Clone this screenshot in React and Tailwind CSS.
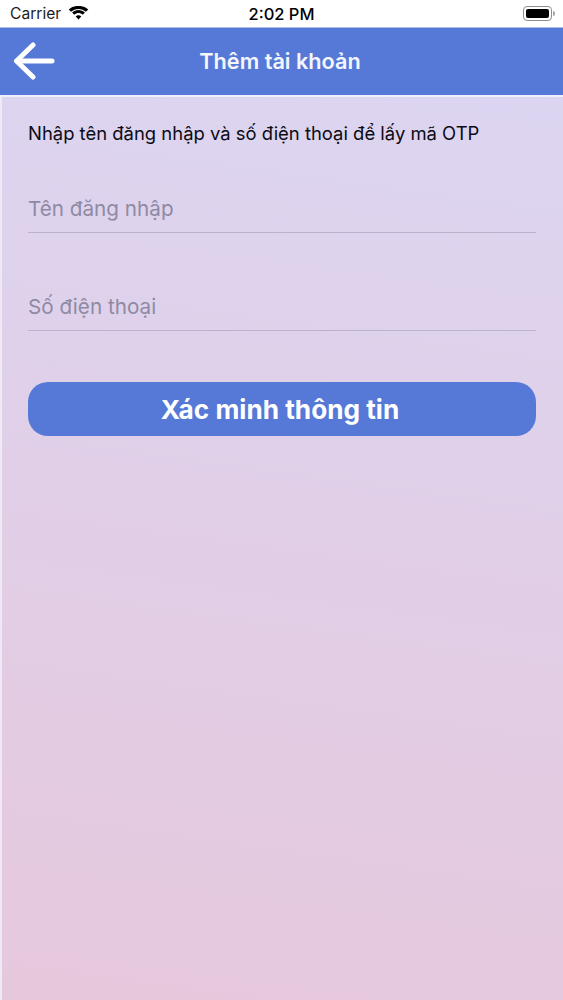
import React from "react";

function Wifi() {
  return (
    <svg width="21" height="15" viewBox="0 0 21 15" className="ml-[7px] -mt-[1px]" fill="#000">
      <path d="M10.500 2.900c2.900 0 5.400 1 7.400 2.900L20.300 3.500C17.700 1.100 14.300-.1 10.500-.1S3.300 1.100.7 3.500l2.400 2.300c2-1.900 4.500-2.900 7.400-2.900z" />
      <path d="M10.500 7.100c1.600 0 3.100.6 4.300 1.600l2.100-2.200c-1.700-1.500-4-2.400-6.400-2.400S5.800 5 4.100 6.500l2.100 2.200c1.200-1 2.700-1.600 4.300-1.600z" />
      <path d="M10.500 9.300c-1.100 0-2.100.4-2.800 1.100l2.800 3.100 2.800-3.100c-.7-.7-1.700-1.100-2.800-1.100z" />
    </svg>
  );
}

function Battery() {
  return (
    <div className="flex items-center">
      <div className="w-[29px] h-[15px] rounded-[4px] border border-[#8f8f8f] p-[2px] flex">
        <div className="flex-1 rounded-[2px] bg-black" />
      </div>
      <div className="ml-[1px] w-[2px] h-[5px] rounded-r-sm bg-[#a5a5a5]" />
    </div>
  );
}

function Field({ label, className }) {
  return (
    <div className={`h-[50px] border-b border-[#bcb2cf] flex items-center ${className}`}>
      <span className="text-[20.700px] leading-[24px] text-[#8f8aa3] mt-[2px]">{label}</span>
    </div>
  );
}

export default function App() {
  return (
    <div className="w-[563px] h-[1000px] overflow-hidden flex flex-col bg-white font-['Inter','Noto_Sans',sans-serif]">
      <div className="h-[27px] shrink-0 pl-[10px] pr-[8px] grid grid-cols-[1fr_auto_1fr] items-center text-black">
        <div className="flex items-center text-[15.600px] leading-[18px] text-[#1c1c1e] pt-[1px]">
          Carrier
          <Wifi />
        </div>
        <div className="text-[16.500px] leading-[18px] font-medium -ml-[2px]">2:02 PM</div>
        <div className="flex justify-end"><Battery /></div>
      </div>
      <div className="h-[70px] shrink-0 border-t border-[#a9bce6] border-b-2 border-b-[#eef0fa] bg-[#5679d7] relative flex items-center justify-center">
        <svg width="42" height="38" viewBox="0 0 42 38" className="absolute left-[13px] top-[14px]" fill="none" stroke="#fff" strokeWidth="5" strokeLinecap="round" strokeLinejoin="round">
          <path d="M39 19H4" />
          <path d="M20 3 3.500 19 20 35" />
        </svg>
        <span className="text-[21.700px] leading-[26px] font-semibold text-[#f4f6fd] -mt-[2px] -ml-[3px]">Thêm tài khoản</span>
      </div>
      <div className="flex-1 border-l-2 border-[#eee9f5] bg-linear-[188deg] from-[#dcd5f1] to-[#e6c8dc] pl-[26px] pr-[27px] flex flex-col">
        <p className="mt-[24px] text-[18.450px] leading-[24px] text-[#0b0b14]">Nhập tên đăng nhập và số điện thoại để lấy mã OTP</p>
        <Field label="Tên đăng nhập" className="mt-[38px]" />
        <Field label="Số điện thoại" className="mt-[48px]" />
        <button className="mt-[51px] h-[54px] rounded-[20px] bg-[#5679d7] text-white text-[26.200px] leading-[32px] font-bold flex items-center justify-center pr-[4px] pt-[1px]">
          Xác minh thông tin
        </button>
      </div>
    </div>
  );
}
